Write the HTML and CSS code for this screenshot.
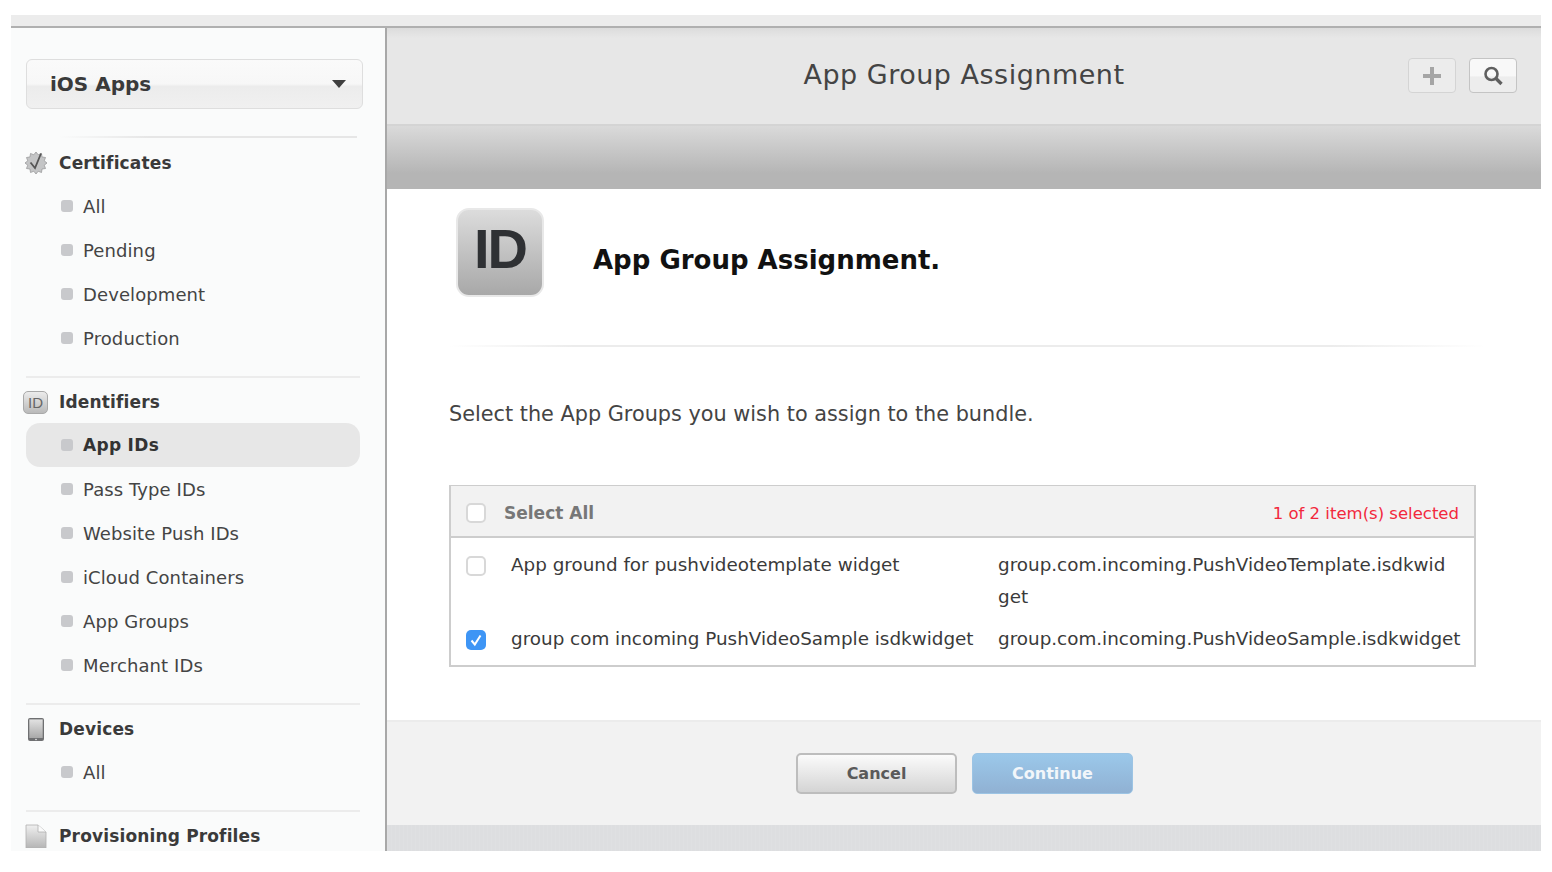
FILE: index.html
```html
<!DOCTYPE html>
<html lang="en">
<head>
    <meta charset="UTF-8">
    <meta name="viewport" content="width=device-width, initial-scale=1.0">
    <title>App Group Assignment</title>
    <link rel="stylesheet" href="styles.css">
</head>
<body>

<div class="frame">
    <div class="top-strip"></div>
    <div class="columns">

        <!-- Left navigation -->
        <nav class="sidebar">
            <div class="platform">
                <span>iOS Apps</span>
                <span class="platform-arrow"></span>
            </div>
            <div class="first-rule"></div>

            <div class="group">
                <div class="group-head">
                    <svg class="group-icon" viewBox="0 0 24 24">
                        <polygon fill="#c4c5c6" stroke="#9a9b9c" stroke-width="0.8" points="23,12 20.21,14.2 21.53,17.5 18.01,18.01 17.5,21.53 14.2,20.21 12,23 9.8,20.21 6.5,21.53 5.99,18.01 2.47,17.5 3.79,14.2 1,12 3.79,9.8 2.47,6.5 5.99,5.99 6.5,2.47 9.8,3.79 12,1 14.2,3.79 17.5,2.47 18.01,5.99 21.53,6.5 20.21,9.8"/>
                        <path d="M6.5 11.5 L11 17 L17 2.5" fill="none" stroke="#555" stroke-width="1.8"/>
                    </svg>
                    Certificates
                </div>
                <div class="item"><i></i>All</div>
                <div class="item"><i></i>Pending</div>
                <div class="item"><i></i>Development</div>
                <div class="item"><i></i>Production</div>
            </div>

            <div class="group">
                <div class="group-head">
                    <span class="id-small">ID</span>
                    Identifiers
                </div>
                <div class="item active"><i></i>App IDs</div>
                <div class="item"><i></i>Pass Type IDs</div>
                <div class="item"><i></i>Website Push IDs</div>
                <div class="item"><i></i>iCloud Containers</div>
                <div class="item"><i></i>App Groups</div>
                <div class="item"><i></i>Merchant IDs</div>
            </div>

            <div class="group">
                <div class="group-head">
                    <svg class="group-icon" viewBox="0 0 26 24">
                        <defs>
                            <linearGradient id="deviceFill" x1="0" y1="0" x2="0" y2="1">
                                <stop offset="0" stop-color="#e2e2e2"/>
                                <stop offset="1" stop-color="#a9a9a9"/>
                            </linearGradient>
                        </defs>
                        <rect x="5" y="1" width="16" height="23" rx="2" fill="#6f7072"/>
                        <rect x="6.3" y="2.4" width="13.4" height="18.6" fill="url(#deviceFill)"/>
                        <circle cx="13" cy="22.5" r="0.8" fill="#eee"/>
                    </svg>
                    Devices
                </div>
                <div class="item"><i></i>All</div>
            </div>

            <div class="group">
                <div class="group-head">
                    <svg class="group-icon" viewBox="0 0 26 24">
                        <defs>
                            <linearGradient id="pageFill" x1="0" y1="0" x2="0" y2="1">
                                <stop offset="0" stop-color="#f0f0f0"/>
                                <stop offset="1" stop-color="#b5b5b5"/>
                            </linearGradient>
                        </defs>
                        <path d="M3 1 H15 L23 8 V24 H3 Z" fill="url(#pageFill)" stroke="#b0b0b0" stroke-width="0.8"/>
                        <path d="M15 1 V8 H23" fill="#fafafa" stroke="#b0b0b0" stroke-width="0.8"/>
                    </svg>
                    Provisioning Profiles
                </div>
            </div>
        </nav>

        <!-- Main panel -->
        <main class="main">
            <header class="main-head">
                <h1>App Group Assignment</h1>
                <div class="head-buttons">
                    <div class="head-btn dim">
                        <svg viewBox="0 0 20 20" width="20" height="20"><path d="M10 1 V19 M1 10 H19" stroke="#a5a5a5" stroke-width="4"/></svg>
                    </div>
                    <div class="head-btn">
                        <svg viewBox="0 0 20 20" width="20" height="20"><circle cx="8.5" cy="8" r="6" fill="none" stroke="#5f5f5f" stroke-width="2.6"/><path d="M13 12.5 L18.5 18" stroke="#5f5f5f" stroke-width="3.4"/></svg>
                    </div>
                </div>
            </header>
            <div class="band"></div>

            <section class="content">
                <div class="title-row">
                    <div class="id-big">ID</div>
                    <h2>App Group Assignment.</h2>
                </div>
                <div class="title-rule"></div>
                <p class="lead">Select the App Groups you wish to assign to the bundle.</p>

                <div class="table">
                    <div class="table-head">
                        <span class="check"></span>
                        <span class="select-all">Select All</span>
                        <span class="count">1 of 2 item(s) selected</span>
                    </div>
                    <div class="row">
                        <span class="check"></span>
                        <span class="name">App ground for pushvideotemplate widget</span>
                        <span class="bundle">group.com.incoming.PushVideoTemplate.isdkwid<wbr>get</span>
                    </div>
                    <div class="row">
                        <span class="check on">
                            <svg viewBox="0 0 20 20" width="20" height="20"><path d="M5.5 10.5 L8.8 14.5 L14.5 5.5" fill="none" stroke="#fff" stroke-width="2"/></svg>
                        </span>
                        <span class="name">group com incoming PushVideoSample isdkwidget</span>
                        <span class="bundle">group.com.incoming.PushVideoSample.isdkwidget</span>
                    </div>
                </div>
            </section>

            <footer class="actions">
                <div class="btn cancel">Cancel</div>
                <div class="btn continue">Continue</div>
            </footer>
            <div class="texture"></div>
        </main>
    </div>
</div>

</body>
</html>
```

FILE: styles.css
```css
body {
    font-family: 'DejaVu Sans', Verdana, sans-serif;
    margin: 0;
    padding: 0;
    background-color: #fff;
    color: #333;
}
.frame {
    width: 1530px;
    height: 836px;
    margin: 15px 0 0 11px;
    overflow: hidden;
    display: flex;
    flex-direction: column;
}
.top-strip {
    height: 11px;
    flex: none;
    background-color: #ececec;
    border-bottom: 2px solid #b0b0b0;
}
.columns {
    flex: 1;
    display: flex;
    min-height: 0;
}

/* Sidebar */
.sidebar {
    width: 374px;
    flex: none;
    background-color: #fafbfb;
    border-right: 2px solid #a8a8a8;
    padding-top: 31px;
    overflow: hidden;
}
.platform {
    width: 337px;
    height: 50px;
    margin-left: 15px;
    box-sizing: border-box;
    padding: 0 16px 0 23px;
    display: flex;
    align-items: center;
    justify-content: space-between;
    border: 1px solid #dedede;
    border-radius: 6px;
    background: linear-gradient(#fafafa, #f7f7f7 50%, #ececec 55%, #f0f0f0);
    font-size: 20px;
    font-weight: bold;
    color: #3a3a3a;
}
.platform-arrow {
    width: 0;
    height: 0;
    border-left: 7px solid transparent;
    border-right: 7px solid transparent;
    border-top: 8px solid #3f3f3f;
}
.first-rule {
    height: 2px;
    margin: 27px 28px 2px 48px;
    background: linear-gradient(to right, #fafbfb, #e6e6e6 30%);
}
.group {
    margin: 0 25px 0 15px;
    padding-bottom: 16px;
    border-bottom: 2px solid #ececec;
}
.group:last-child {
    border-bottom: none;
}
.group-head {
    height: 44px;
    margin: 1px 0 0 -3px;
    padding-top: 2px;
    box-sizing: border-box;
    display: flex;
    align-items: center;
    font-size: 17px;
    font-weight: bold;
    letter-spacing: 0.15px;
    color: #3a3a3a;
}
.group-icon {
    width: 26px;
    height: 24px;
    margin-right: 10px;
    flex: none;
}
.id-small {
    width: 25px;
    height: 23px;
    margin-right: 11px;
    box-sizing: border-box;
    flex: none;
    border: 1px solid #a9a9a9;
    border-radius: 5px;
    background: linear-gradient(#ececec, #b9b9b9);
    color: #666;
    font-family: 'Liberation Sans', Arial, sans-serif;
    font-size: 15px;
    font-weight: normal;
    letter-spacing: 0;
    text-align: center;
    line-height: 21px;
}
.item {
    height: 44px;
    display: flex;
    align-items: center;
    font-size: 18px;
    letter-spacing: 0.1px;
    color: #444;
    padding-left: 35px;
    border-radius: 14px;
}
.item i {
    width: 12px;
    height: 12px;
    margin-right: 10px;
    background-color: #c8c9cc;
    border-radius: 3px;
    flex: none;
}
.item.active {
    background-color: #e7e7e7;
    font-size: 17px;
    font-weight: bold;
    letter-spacing: 0.3px;
    color: #333;
}

/* Main panel */
.main {
    flex: 1;
    min-width: 0;
    display: flex;
    flex-direction: column;
    background-color: #fff;
}
.main-head {
    height: 98px;
    flex: none;
    box-sizing: border-box;
    position: relative;
    background: linear-gradient(#dcdcdc, #e7e7e7 10px);
    border-bottom: 2px solid #d4d4d4;
    padding-top: 28px;
    text-align: center;
}
.main-head h1 {
    margin: 0;
    font-size: 27px;
    font-weight: normal;
    letter-spacing: 0.5px;
    line-height: 38px;
    color: #444;
}
.head-buttons {
    position: absolute;
    right: 24px;
    top: 30px;
    display: flex;
    gap: 13px;
}
.head-btn {
    width: 48px;
    height: 35px;
    box-sizing: border-box;
    display: flex;
    align-items: center;
    justify-content: center;
    border: 1px solid #c4c4c4;
    border-radius: 4px;
    background: linear-gradient(#f8f8f8 50%, #ededed 55%);
}
.head-btn.dim {
    background: #ececec;
    border-color: #d4d4d4;
}
.band {
    height: 63px;
    flex: none;
    background: linear-gradient(#dadada, #b5b5b5 75%);
}

/* Content */
.content {
    flex: 1;
    min-height: 0;
    padding: 0 65px 0 62px;
}
.title-row {
    display: flex;
    align-items: center;
    padding-top: 19px;
}
.id-big {
    width: 88px;
    height: 89px;
    margin-left: 7px;
    box-sizing: border-box;
    border: 2px solid #e8e8e8;
    border-radius: 13px;
    background: linear-gradient(#dcdcdc, #a8a8a8);
    color: #2f3134;
    font-family: 'Liberation Sans', Arial, sans-serif;
    font-size: 56px;
    font-weight: bold;
    letter-spacing: -2px;
    text-align: center;
    line-height: 78px;
}
.title-row h2 {
    margin: 14px 0 0 49px;
    font-size: 26px;
    font-weight: bold;
    color: #111;
}
.title-rule {
    height: 2px;
    margin: 48px -10px 0 0;
    background: linear-gradient(to right, #fff, #ececec 12%, #ececec 85%, #fff);
}
.lead {
    margin: 53px 0 0;
    font-size: 20.8px;
    line-height: 28px;
    color: #444;
}
.table {
    margin-top: 57px;
    width: 1027px;
    box-sizing: border-box;
    border: 2px solid #cdcdcd;
    border-top-width: 1px;
}
.table-head {
    height: 52px;
    box-sizing: border-box;
    display: flex;
    align-items: center;
    padding: 4px 15px 0 15px;
    background-color: #f2f2f2;
    border-bottom: 2px solid #cdcdcd;
}
.select-all {
    margin-left: 18px;
    font-size: 17px;
    font-weight: bold;
    color: #777;
}
.count {
    margin-left: auto;
    font-size: 16.5px;
    color: #f2283c;
}
.row {
    display: grid;
    grid-template-columns: 20px 512px 1fr;
    padding: 11px 7px 10px 15px;
    font-size: 18.35px;
    line-height: 32px;
    color: #3a3a3a;
}
.row:last-child {
    padding-top: 0;
}
.check {
    width: 20px;
    height: 20px;
    margin-top: 7px;
    box-sizing: border-box;
    border: 2px solid #d8d8d8;
    border-radius: 5px;
    background-color: #fff;
    flex: none;
}
.table-head .check {
    margin-top: 0;
}
.check.on {
    border: none;
    background-color: #3e95f5;
}
.check svg {
    display: block;
}
.name {
    padding-left: 25px;
    white-space: nowrap;
}

/* Footer buttons */
.actions {
    height: 105px;
    flex: none;
    box-sizing: border-box;
    background-color: #f2f2f2;
    border-top: 2px solid #ececec;
    display: flex;
    align-items: center;
    justify-content: center;
    gap: 15px;
    padding: 0 0 1px 1px;
}
.btn {
    width: 161px;
    height: 41px;
    box-sizing: border-box;
    border-radius: 5px;
    display: flex;
    align-items: center;
    justify-content: center;
    font-size: 16px;
    font-weight: bold;
}
.btn.cancel {
    border: 2px solid #bdbdbd;
    background: linear-gradient(#fbfbfb, #d4d4d4);
    color: #5a5a5a;
}
.btn.continue {
    border: 1px solid #9cc4e4;
    background: linear-gradient(#9bc8ea, #90b1d3);
    color: #f2f6fa;
}
.texture {
    height: 26px;
    flex: none;
    background-color: #dddee0;
    background-image: repeating-linear-gradient(90deg, rgba(255,255,255,0.06) 0 1px, transparent 1px 4px);
}
```
